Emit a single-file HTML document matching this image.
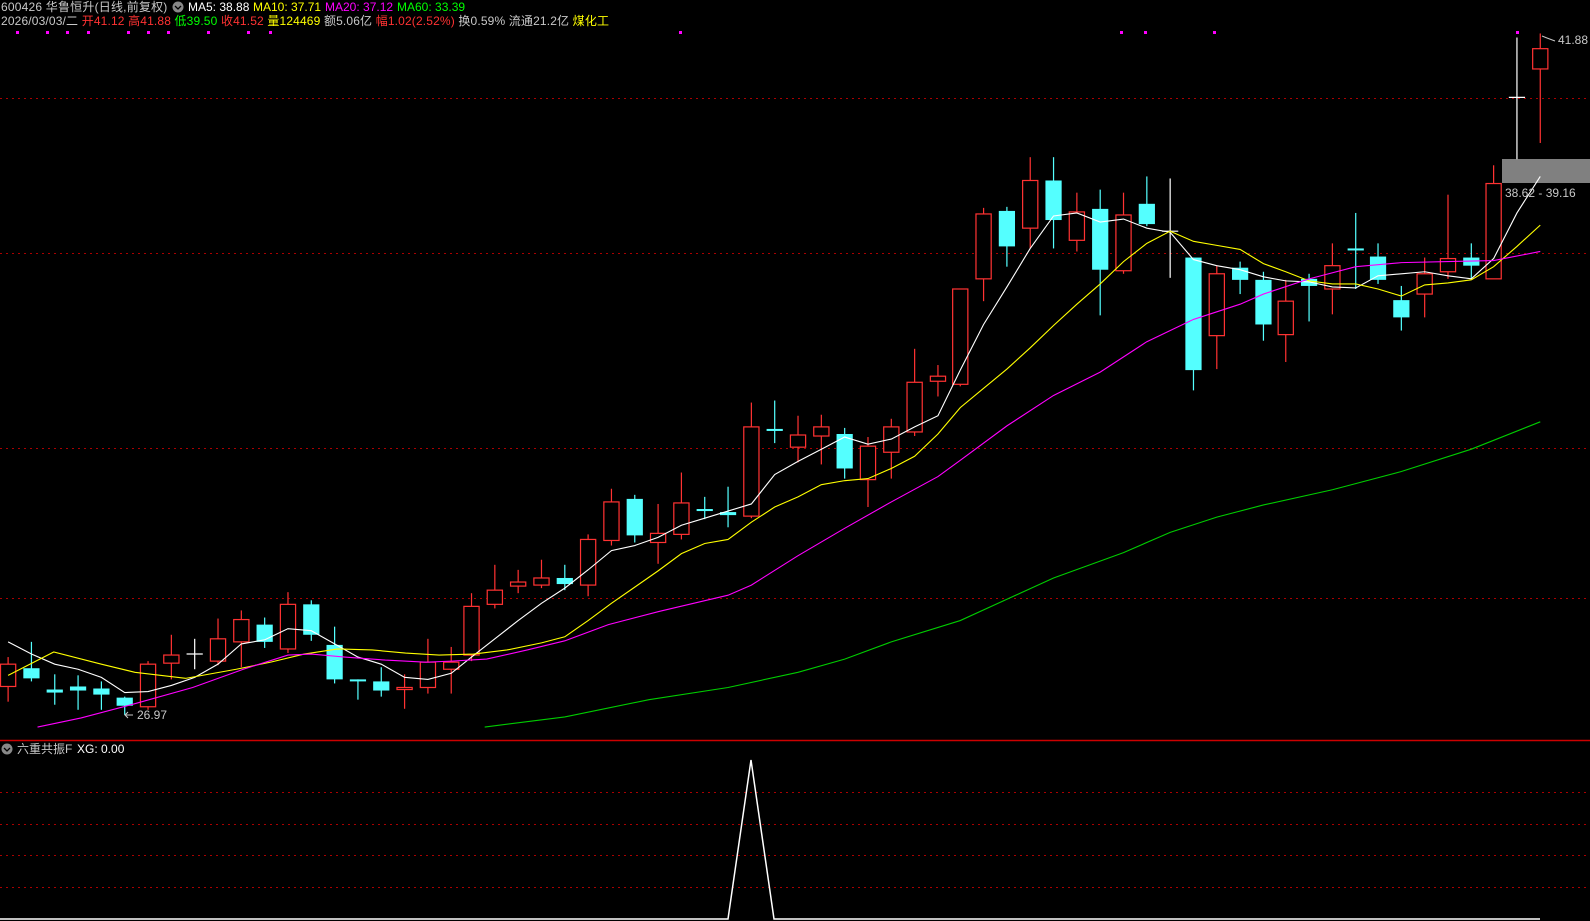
<!DOCTYPE html>
<html><head><meta charset="utf-8"><style>
html,body{margin:0;padding:0;background:#000;width:1590px;height:921px;overflow:hidden}
svg{display:block}
text{font-family:"Liberation Sans","Noto Sans CJK SC",sans-serif;font-size:12px}
</style></head><body>
<svg id="s" width="1590" height="921" xmlns="http://www.w3.org/2000/svg">
<rect width="1590" height="921" fill="#000"/>
<g stroke="#a00" stroke-dasharray="2,4" stroke-width="1">
<line x1="0" y1="98.5" x2="1590" y2="98.5"/><line x1="0" y1="253.5" x2="1590" y2="253.5"/>
<line x1="0" y1="448.5" x2="1590" y2="448.5"/><line x1="0" y1="598.5" x2="1590" y2="598.5"/>
<line x1="0" y1="792.5" x2="1590" y2="792.5"/><line x1="0" y1="824.5" x2="1590" y2="824.5"/>
<line x1="0" y1="855.5" x2="1590" y2="855.5"/><line x1="0" y1="887.5" x2="1590" y2="887.5"/>
</g>
<line x1="0" y1="740.5" x2="1590" y2="740.5" stroke="#c00" stroke-width="1.5"/>
<g fill="#f0f">
<rect x="16" y="31" width="3" height="3"/><rect x="46" y="31" width="3" height="3"/><rect x="66" y="31" width="3" height="3"/><rect x="87" y="31" width="3" height="3"/><rect x="127" y="31" width="3" height="3"/><rect x="147" y="31" width="3" height="3"/><rect x="167" y="31" width="3" height="3"/><rect x="207" y="31" width="3" height="3"/><rect x="247" y="31" width="3" height="3"/><rect x="269" y="31" width="3" height="3"/><rect x="679" y="31" width="3" height="3"/><rect x="1120" y="31" width="3" height="3"/><rect x="1144" y="31" width="3" height="3"/><rect x="1213" y="31" width="3" height="3"/><rect x="1516" y="31" width="3" height="3"/>
</g>
<rect x="1502" y="159" width="88" height="24" fill="#808080"/>
<g id="chart" transform="scale(1.014)"></g>
<polyline points="0,919 728,919 751,760 774,919 1540,919" fill="none" stroke="#fff" stroke-width="1.5"/>
<text x="1" y="11" fill="#c8c8c8" letter-spacing="0.2">600426 华鲁恒升(日线,前复权)</text>
<circle cx="178" cy="7" r="5.5" fill="#888"/><path d="M175 6l3 3 3-3" stroke="#000" fill="none" stroke-width="1.3"/>
<text x="188" y="11" fill="#fff">MA5: 38.88</text>
<text x="253" y="11" fill="#ff0">MA10: 37.71</text>
<text x="325" y="11" fill="#f0f">MA20: 37.12</text>
<text x="397" y="11" fill="#0f0">MA60: 33.39</text>
<text x="1" y="25" fill="#c8c8c8" letter-spacing="0.15">2026/03/03/二 <tspan fill="#ff3232">开41.12 高41.88 </tspan><tspan fill="#0f0">低39.50 </tspan><tspan fill="#ff3232">收41.52 </tspan><tspan fill="#ff0">量124469 </tspan><tspan fill="#c8c8c8">额5.06亿 </tspan><tspan fill="#ff3232">幅1.02(2.52%) </tspan><tspan fill="#c8c8c8">换0.59% 流通21.2亿 </tspan><tspan fill="#ff0">煤化工</tspan></text>
<text x="1558" y="44" fill="#c8c8c8">41.88</text>
<path d="M1542 36l5 2l8 3" stroke="#c8c8c8" fill="none"/>
<text x="1505" y="197" fill="#c8c8c8">38.62 - 39.16</text>
<text x="137" y="719" fill="#c8c8c8">26.97</text>
<path d="M133 715h-8m3-3l-3 3l3 3" stroke="#c8c8c8" fill="none"/>
<circle cx="7" cy="749" r="5.5" fill="#888"/><path d="M4 748l3 3 3-3" stroke="#000" fill="none" stroke-width="1.3"/>
<text x="17" y="753" fill="#c8c8c8">六重共振F</text>
<text x="77" y="753" fill="#fff">XG: 0.00</text>
</svg>
<script>
var c=[[8,655,677,648,692,'r'],[31,659,669,633,672,'c'],[54,680,683,665,695,'c'],[77,677,681,666,700,'c'],[100,679,685,672,700,'c'],[123,688,696,687,705,'c'],[146,655,697,652,700,'r'],[169,646,654,626,670,'r'],[192,645,646,630,660,'w'],[215,630,652,610,656,'r'],[238,611,633,602,658,'r'],[261,616,633,609,639,'c'],[284,596,640,584,644,'r'],[307,596,626,592,632,'c'],[330,636,670,618,674,'c'],[353,670,672,670,690,'c'],[376,672,681,658,687,'c'],[399,678,680,665,699,'r'],[422,653,678,630,684,'r'],[445,653,660,638,684,'r'],[465,598,646,585,652,'r'],[488,582,596,557,600,'r'],[511,574,578,562,585,'r'],[534,570,577,552,580,'r'],[557,570,576,557,582,'c'],[580,532,577,527,588,'r'],[603,495,533,482,538,'r'],[626,492,528,488,535,'c'],[649,526,535,497,556,'r'],[672,496,527,466,532,'r'],[695,502,504,490,512,'c'],[718,505,508,480,520,'c'],[741,421,509,397,511,'r'],[764,423,424,395,437,'c'],[787,429,441,410,456,'r'],[810,421,430,409,458,'r'],[833,428,462,422,472,'c'],[856,440,473,431,500,'r'],[879,421,446,413,472,'r'],[902,377,426,344,430,'r'],[925,371,376,360,391,'r'],[947,285,379,285,381,'r'],[970,211,275,205,297,'r'],[993,208,243,204,263,'c'],[1016,178,225,155,245,'r'],[1039,178,217,155,245,'c'],[1062,209,237,190,248,'r'],[1085,206,266,187,311,'c'],[1108,212,267,190,270,'r'],[1131,201,221,174,223,'c'],[1154,228,229,176,274,'w'],[1177,254,365,254,385,'c'],[1200,270,331,262,364,'r'],[1223,264,276,258,290,'c'],[1246,276,320,268,336,'c'],[1268,297,330,276,357,'r'],[1291,275,282,270,317,'c'],[1314,262,285,240,310,'r'],[1337,245,247,210,285,'c'],[1359,253,276,240,280,'c'],[1382,296,313,282,326,'c'],[1405,270,290,254,313,'r'],[1428,255,268,192,275,'r'],[1451,254,262,240,275,'c'],[1473,181,275,163,275,'r'],[1496,96,97,37,157,'w'],[1519,48,68,33,141,'r']];
var s='';
function pl(p,col){return '<polyline points="'+p+'" fill="none" stroke="'+col+'" stroke-width="1.1"/>';}
c.forEach(function(k){var x=k[0],t=k[1],b=k[2],h=k[3],l=k[4],t2=k[5];
var col=t2=='r'?'#ff3232':t2=='c'?'#54ffff':'#fff';
s+='<line x1="'+x+'" y1="'+h+'" x2="'+x+'" y2="'+l+'" stroke="'+col+'" stroke-width="1.2"/>';
if(t2=='w'){s+='<line x1="'+(x-8)+'" y1="'+t+'" x2="'+(x+8)+'" y2="'+t+'" stroke="#fff" stroke-width="1.2"/>';}
else if(t2=='c'){s+='<rect x="'+(x-8)+'" y="'+t+'" width="16" height="'+Math.max(b-t,2)+'" fill="#54ffff"/>';}
else{s+='<rect x="'+(x-7.5)+'" y="'+t+'" width="15" height="'+Math.max(b-t,1)+'" fill="#000" stroke="#ff3232" stroke-width="1.2"/>';}
});
s+=pl("8,633 31,645 54,655 77,660 100,668 123,683 146,682 169,676 192,668 215,655 238,635 261,631 284,620 307,622 330,635 353,648 376,655 399,668 422,670 445,664 465,648 488,630 511,612 534,595 557,580 580,562 603,543 626,538 649,530 672,518 695,511 718,504 741,497 764,468 787,455 810,443 833,431 856,438 879,433 902,421 925,410 947,365 970,320 993,283 1016,245 1039,213 1062,210 1085,219 1108,216 1131,225 1154,229 1177,256 1200,262 1223,266 1246,273 1268,277 1291,278 1314,283 1337,284 1359,272 1382,270 1405,268 1428,272 1451,275 1473,255 1496,210 1519,174","#fff");
s+=pl("8,666 53,643 100,655 133,663 183,669 233,660 267,653 300,645 333,640 367,641 400,644 433,646 467,645 500,641 534,634 557,628 580,612 603,595 626,579 649,563 672,546 695,536 718,532 741,515 764,500 787,490 810,478 833,474 856,472 879,462 902,450 925,428 947,402 970,383 993,364 1016,343 1039,321 1062,300 1085,280 1108,258 1131,240 1154,228 1177,238 1200,242 1223,246 1246,260 1268,268 1291,277 1314,280 1337,280 1359,285 1382,292 1405,281 1428,279 1451,276 1473,263 1496,243 1519,222","#ff0");
s+=pl("37,717 80,708 133,694 190,678 240,660 284,646 307,645 340,648 380,651 420,653 445,652 480,650 520,641 557,632 600,616 650,603 718,587 741,577 787,548 833,521 879,495 925,470 947,454 993,420 1039,390 1085,367 1131,337 1177,315 1223,300 1246,290 1291,275 1337,263 1382,259 1428,258 1473,257 1519,248","#f0f");
s+=pl("478,717 557,707 640,690 718,678 787,663 833,650 879,633 947,612 993,591 1039,570 1108,545 1154,525 1200,510 1246,498 1314,483 1382,465 1451,443 1519,416","#0c0");
document.getElementById('chart').innerHTML=s;
</script>
</body></html>
